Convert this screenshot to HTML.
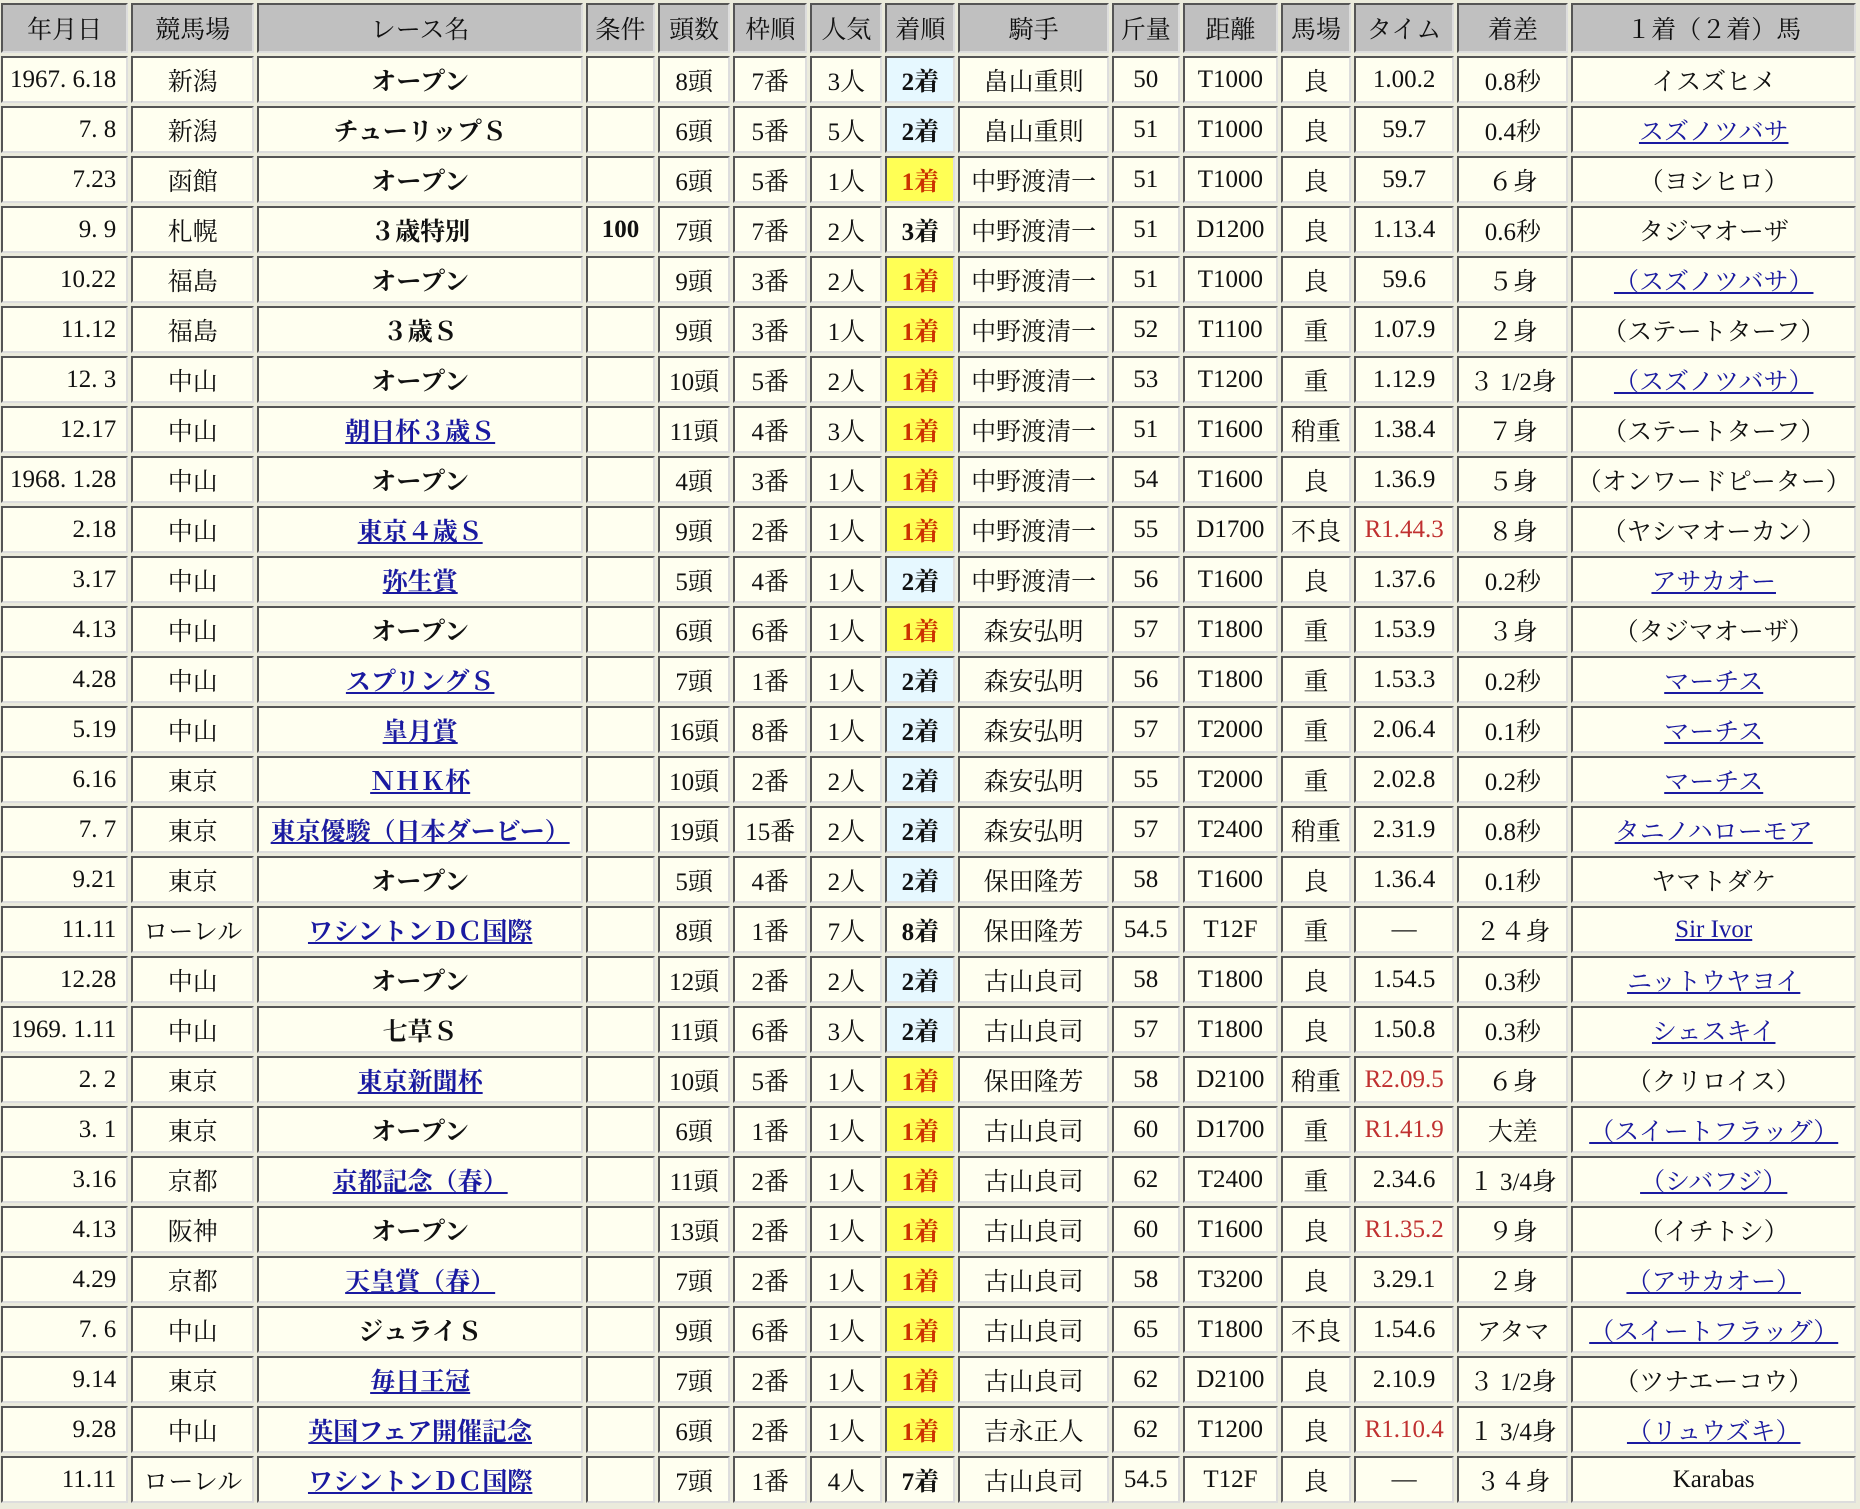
<!DOCTYPE html>
<html><head><meta charset="utf-8"><style>
body{margin:0;background:#ebebdc;width:1860px;height:1509px;overflow:hidden}
table{border-collapse:separate;border-spacing:3px;table-layout:fixed;width:1861px;margin:0 0 0 -2px;font-family:"Liberation Serif","Noto Serif CJK JP",serif;font-size:25px;color:#111}
td,th{border:2px solid;border-color:#555 #ddd #ddd #555;background:#fffff0;text-align:center;padding:0 3px;white-space:nowrap;overflow:hidden;height:47px;box-sizing:border-box}
th{background:#c0c0c0;font-weight:normal;height:50px}
td.d{text-align:right;padding-right:10px}
td.n{font-weight:bold}
a{color:#1a1aa0;text-decoration:underline;font-weight:bold}
td.h a{font-weight:normal}
.s2{background:#e6f8ff;font-weight:bold}
.s1{background:#ffff55;color:#cc3300;font-weight:bold}
.s3{font-weight:bold}
.r{color:#c03030}
</style></head><body>
<table>
<colgroup><col style="width:127px"><col style="width:123px"><col style="width:325px"><col style="width:69px"><col style="width:72px"><col style="width:74px"><col style="width:72px"><col style="width:70px"><col style="width:150px"><col style="width:68px"><col style="width:95px"><col style="width:70px"><col style="width:100px"><col style="width:111px"><col style="width:284px"></colgroup>
<tr><th>年月日</th><th>競馬場</th><th>レース名</th><th>条件</th><th>頭数</th><th>枠順</th><th>人気</th><th>着順</th><th>騎手</th><th>斤量</th><th>距離</th><th>馬場</th><th>タイム</th><th>着差</th><th>１着（２着）馬</th></tr>
<tr><td class="d">1967. 6.18</td><td>新潟</td><td class="n">オープン</td><td></td><td>8頭</td><td>7番</td><td>3人</td><td class="s2">2着</td><td>畠山重則</td><td>50</td><td>T1000</td><td>良</td><td>1.00.2</td><td>0.8秒</td><td>イスズヒメ</td></tr>
<tr><td class="d">7. 8</td><td>新潟</td><td class="n">チューリップＳ</td><td></td><td>6頭</td><td>5番</td><td>5人</td><td class="s2">2着</td><td>畠山重則</td><td>51</td><td>T1000</td><td>良</td><td>59.7</td><td>0.4秒</td><td class="h"><a>スズノツバサ</a></td></tr>
<tr><td class="d">7.23</td><td>函館</td><td class="n">オープン</td><td></td><td>6頭</td><td>5番</td><td>1人</td><td class="s1">1着</td><td>中野渡清一</td><td>51</td><td>T1000</td><td>良</td><td>59.7</td><td>６身</td><td>（ヨシヒロ）</td></tr>
<tr><td class="d">9. 9</td><td>札幌</td><td class="n">３歳特別</td><td class="n">100</td><td>7頭</td><td>7番</td><td>2人</td><td class="s3">3着</td><td>中野渡清一</td><td>51</td><td>D1200</td><td>良</td><td>1.13.4</td><td>0.6秒</td><td>タジマオーザ</td></tr>
<tr><td class="d">10.22</td><td>福島</td><td class="n">オープン</td><td></td><td>9頭</td><td>3番</td><td>2人</td><td class="s1">1着</td><td>中野渡清一</td><td>51</td><td>T1000</td><td>良</td><td>59.6</td><td>５身</td><td class="h"><a>（スズノツバサ）</a></td></tr>
<tr><td class="d">11.12</td><td>福島</td><td class="n">３歳Ｓ</td><td></td><td>9頭</td><td>3番</td><td>1人</td><td class="s1">1着</td><td>中野渡清一</td><td>52</td><td>T1100</td><td>重</td><td>1.07.9</td><td>２身</td><td>（ステートターフ）</td></tr>
<tr><td class="d">12. 3</td><td>中山</td><td class="n">オープン</td><td></td><td>10頭</td><td>5番</td><td>2人</td><td class="s1">1着</td><td>中野渡清一</td><td>53</td><td>T1200</td><td>重</td><td>1.12.9</td><td>３ 1/2身</td><td class="h"><a>（スズノツバサ）</a></td></tr>
<tr><td class="d">12.17</td><td>中山</td><td><a>朝日杯３歳Ｓ</a></td><td></td><td>11頭</td><td>4番</td><td>3人</td><td class="s1">1着</td><td>中野渡清一</td><td>51</td><td>T1600</td><td>稍重</td><td>1.38.4</td><td>７身</td><td>（ステートターフ）</td></tr>
<tr><td class="d">1968. 1.28</td><td>中山</td><td class="n">オープン</td><td></td><td>4頭</td><td>3番</td><td>1人</td><td class="s1">1着</td><td>中野渡清一</td><td>54</td><td>T1600</td><td>良</td><td>1.36.9</td><td>５身</td><td>（オンワードピーター）</td></tr>
<tr><td class="d">2.18</td><td>中山</td><td><a>東京４歳Ｓ</a></td><td></td><td>9頭</td><td>2番</td><td>1人</td><td class="s1">1着</td><td>中野渡清一</td><td>55</td><td>D1700</td><td>不良</td><td class="r">R1.44.3</td><td>８身</td><td>（ヤシマオーカン）</td></tr>
<tr><td class="d">3.17</td><td>中山</td><td><a>弥生賞</a></td><td></td><td>5頭</td><td>4番</td><td>1人</td><td class="s2">2着</td><td>中野渡清一</td><td>56</td><td>T1600</td><td>良</td><td>1.37.6</td><td>0.2秒</td><td class="h"><a>アサカオー</a></td></tr>
<tr><td class="d">4.13</td><td>中山</td><td class="n">オープン</td><td></td><td>6頭</td><td>6番</td><td>1人</td><td class="s1">1着</td><td>森安弘明</td><td>57</td><td>T1800</td><td>重</td><td>1.53.9</td><td>３身</td><td>（タジマオーザ）</td></tr>
<tr><td class="d">4.28</td><td>中山</td><td><a>スプリングＳ</a></td><td></td><td>7頭</td><td>1番</td><td>1人</td><td class="s2">2着</td><td>森安弘明</td><td>56</td><td>T1800</td><td>重</td><td>1.53.3</td><td>0.2秒</td><td class="h"><a>マーチス</a></td></tr>
<tr><td class="d">5.19</td><td>中山</td><td><a>皐月賞</a></td><td></td><td>16頭</td><td>8番</td><td>1人</td><td class="s2">2着</td><td>森安弘明</td><td>57</td><td>T2000</td><td>重</td><td>2.06.4</td><td>0.1秒</td><td class="h"><a>マーチス</a></td></tr>
<tr><td class="d">6.16</td><td>東京</td><td><a>ＮＨＫ杯</a></td><td></td><td>10頭</td><td>2番</td><td>2人</td><td class="s2">2着</td><td>森安弘明</td><td>55</td><td>T2000</td><td>重</td><td>2.02.8</td><td>0.2秒</td><td class="h"><a>マーチス</a></td></tr>
<tr><td class="d">7. 7</td><td>東京</td><td><a>東京優駿（日本ダービー）</a></td><td></td><td>19頭</td><td>15番</td><td>2人</td><td class="s2">2着</td><td>森安弘明</td><td>57</td><td>T2400</td><td>稍重</td><td>2.31.9</td><td>0.8秒</td><td class="h"><a>タニノハローモア</a></td></tr>
<tr><td class="d">9.21</td><td>東京</td><td class="n">オープン</td><td></td><td>5頭</td><td>4番</td><td>2人</td><td class="s2">2着</td><td>保田隆芳</td><td>58</td><td>T1600</td><td>良</td><td>1.36.4</td><td>0.1秒</td><td>ヤマトダケ</td></tr>
<tr><td class="d">11.11</td><td>ローレル</td><td><a>ワシントンＤＣ国際</a></td><td></td><td>8頭</td><td>1番</td><td>7人</td><td class="s3">8着</td><td>保田隆芳</td><td>54.5</td><td>T12F</td><td>重</td><td>—</td><td>２４身</td><td class="h"><a>Sir Ivor</a></td></tr>
<tr><td class="d">12.28</td><td>中山</td><td class="n">オープン</td><td></td><td>12頭</td><td>2番</td><td>2人</td><td class="s2">2着</td><td>古山良司</td><td>58</td><td>T1800</td><td>良</td><td>1.54.5</td><td>0.3秒</td><td class="h"><a>ニットウヤヨイ</a></td></tr>
<tr><td class="d">1969. 1.11</td><td>中山</td><td class="n">七草Ｓ</td><td></td><td>11頭</td><td>6番</td><td>3人</td><td class="s2">2着</td><td>古山良司</td><td>57</td><td>T1800</td><td>良</td><td>1.50.8</td><td>0.3秒</td><td class="h"><a>シェスキイ</a></td></tr>
<tr><td class="d">2. 2</td><td>東京</td><td><a>東京新聞杯</a></td><td></td><td>10頭</td><td>5番</td><td>1人</td><td class="s1">1着</td><td>保田隆芳</td><td>58</td><td>D2100</td><td>稍重</td><td class="r">R2.09.5</td><td>６身</td><td>（クリロイス）</td></tr>
<tr><td class="d">3. 1</td><td>東京</td><td class="n">オープン</td><td></td><td>6頭</td><td>1番</td><td>1人</td><td class="s1">1着</td><td>古山良司</td><td>60</td><td>D1700</td><td>重</td><td class="r">R1.41.9</td><td>大差</td><td class="h"><a>（スイートフラッグ）</a></td></tr>
<tr><td class="d">3.16</td><td>京都</td><td><a>京都記念（春）</a></td><td></td><td>11頭</td><td>2番</td><td>1人</td><td class="s1">1着</td><td>古山良司</td><td>62</td><td>T2400</td><td>重</td><td>2.34.6</td><td>１ 3/4身</td><td class="h"><a>（シバフジ）</a></td></tr>
<tr><td class="d">4.13</td><td>阪神</td><td class="n">オープン</td><td></td><td>13頭</td><td>2番</td><td>1人</td><td class="s1">1着</td><td>古山良司</td><td>60</td><td>T1600</td><td>良</td><td class="r">R1.35.2</td><td>９身</td><td>（イチトシ）</td></tr>
<tr><td class="d">4.29</td><td>京都</td><td><a>天皇賞（春）</a></td><td></td><td>7頭</td><td>2番</td><td>1人</td><td class="s1">1着</td><td>古山良司</td><td>58</td><td>T3200</td><td>良</td><td>3.29.1</td><td>２身</td><td class="h"><a>（アサカオー）</a></td></tr>
<tr><td class="d">7. 6</td><td>中山</td><td class="n">ジュライＳ</td><td></td><td>9頭</td><td>6番</td><td>1人</td><td class="s1">1着</td><td>古山良司</td><td>65</td><td>T1800</td><td>不良</td><td>1.54.6</td><td>アタマ</td><td class="h"><a>（スイートフラッグ）</a></td></tr>
<tr><td class="d">9.14</td><td>東京</td><td><a>毎日王冠</a></td><td></td><td>7頭</td><td>2番</td><td>1人</td><td class="s1">1着</td><td>古山良司</td><td>62</td><td>D2100</td><td>良</td><td>2.10.9</td><td>３ 1/2身</td><td>（ツナエーコウ）</td></tr>
<tr><td class="d">9.28</td><td>中山</td><td><a>英国フェア開催記念</a></td><td></td><td>6頭</td><td>2番</td><td>1人</td><td class="s1">1着</td><td>吉永正人</td><td>62</td><td>T1200</td><td>良</td><td class="r">R1.10.4</td><td>１ 3/4身</td><td class="h"><a>（リュウズキ）</a></td></tr>
<tr><td class="d">11.11</td><td>ローレル</td><td><a>ワシントンＤＣ国際</a></td><td></td><td>7頭</td><td>1番</td><td>4人</td><td class="s3">7着</td><td>古山良司</td><td>54.5</td><td>T12F</td><td>良</td><td>—</td><td>３４身</td><td>Karabas</td></tr>
</table>
</body></html>
